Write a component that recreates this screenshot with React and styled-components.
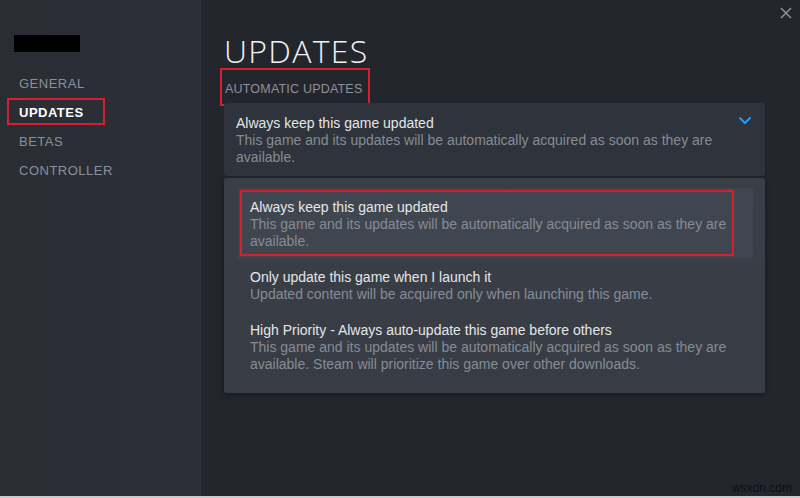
import React from "react";
import styled, { createGlobalStyle } from "styled-components";

const Global = createGlobalStyle`
  html, body { margin: 0; padding: 0; background: #23262d; }
  body { font-family: "Liberation Sans", Arial, sans-serif; }
  * { box-sizing: border-box; }
`;

const Window = styled.div`
  position: relative;
  width: 800px;
  height: 498px;
  display: flex;
  overflow: hidden;
  background: #23262d;
`;

const Sidebar = styled.nav`
  width: 201px;
  flex: none;
  background: linear-gradient(90deg, #2a2d34 0%, #2c2f37 100%);
  padding: 35px 0 0 0;
  display: flex;
  flex-direction: column;
`;

const Redacted = styled.div`
  width: 66px;
  height: 17px;
  background: #000;
  margin: 0 0 17px 14px;
`;

const NavItem = styled.div`
  position: relative;
  font-size: 13px;
  letter-spacing: 0.5px;
  height: 29px;
  line-height: 29px;
  padding-left: 19px;
  color: ${(p) => (p.$active ? "#ffffff" : "#8a9099")};
  font-weight: ${(p) => (p.$active ? 700 : 400)};
`;

const Highlight = styled.div`
  position: absolute;
  border: 2px solid #d3212f;
  pointer-events: none;
`;

const Main = styled.main`
  flex: 1;
  position: relative;
  padding: 33px 35px 0 23px;
  display: flex;
  flex-direction: column;
  background: #23262d;
`;

const Title = styled.h1`
  margin: 0;
  font-family: "Open Sans", "Liberation Sans", sans-serif;
  font-weight: 300;
  font-size: 32px;
  letter-spacing: 1.3px;
  line-height: 36px;
  color: #f2f2f2;
`;

const Section = styled.div`
  position: relative;
  font-size: 12.5px;
  letter-spacing: 0.2px;
  color: #8d939b;
  height: 34px;
  line-height: 40px;
  padding-left: 1px;
`;

const Select = styled.div`
  position: relative;
  background: #2f333b;
  border-radius: 3px;
  padding: 11px 40px 12px 12px;
  height: 73px;
`;

const OptTitle = styled.div`
  font-size: 14px;
  line-height: 18px;
  color: #e4e6e8;
`;

const OptDesc = styled.div`
  font-size: 14px;
  line-height: 17px;
  color: #868c94;
`;

const Chevron = styled.svg`
  position: absolute;
  right: 13px;
  top: 13px;
`;

const List = styled.div`
  margin-top: 2px;
  background: linear-gradient(180deg, #3a3f47 0%, #383d45 100%);
  border-radius: 3px;
  padding: 10px 12px 14px 14px;
  height: 215px;
  display: flex;
  flex-direction: column;
  box-shadow: 0 2px 6px rgba(0,0,0,0.35);
`;

const ListItem = styled.div`
  position: relative;
  padding: 10px 12px 8px 12px;
  background: ${(p) => (p.$selected ? "#40464f" : "transparent")};
`;

const Close = styled.svg`
  position: absolute;
  top: 7px;
  right: 8px;
`;

const BottomStrip = styled.div`
  position: absolute;
  left: 0;
  right: 0;
  bottom: 0;
  height: 2px;
  background: #c9cacc;
`;

const Watermark = styled.div`
  position: absolute;
  right: 8px;
  bottom: 3px;
  font-family: "Liberation Sans", Arial, sans-serif;
  font-size: 12px;
  color: #0d0f12;
`;

export default function App() {
  return (
    <>
      <Global />
      <Window>
        <Sidebar>
          <Redacted />
          <NavItem>GENERAL</NavItem>
          <NavItem $active>
            UPDATES
            <Highlight style={{ left: 7, top: 0, width: 98, height: 27 }} />
          </NavItem>
          <NavItem>BETAS</NavItem>
          <NavItem>CONTROLLER</NavItem>
        </Sidebar>
        <Main>
          <Close width="12" height="12" viewBox="0 0 12 12">
            <path d="M1 1L11 11M11 1L1 11" stroke="#8c9097" strokeWidth="1.5" />
          </Close>
          <Title>UPDATES</Title>
          <Section>
            AUTOMATIC UPDATES
            <Highlight style={{ left: -4, top: -1, width: 150, height: 38 }} />
          </Section>
          <Select>
            <OptTitle>Always keep this game updated</OptTitle>
            <OptDesc>
              This game and its updates will be automatically acquired as soon as they are available.
            </OptDesc>
            <Chevron width="14" height="9" viewBox="0 0 14 9">
              <path d="M1.5 1.5L7 7L12.5 1.5" fill="none" stroke="#1a9fff" strokeWidth="2" />
            </Chevron>
          </Select>
          <List>
            <ListItem $selected>
              <OptTitle>Always keep this game updated</OptTitle>
              <OptDesc>
                This game and its updates will be automatically acquired as soon as they are available.
              </OptDesc>
              <Highlight style={{ left: 2, top: 2, width: 494, height: 66 }} />
            </ListItem>
            <ListItem>
              <OptTitle>Only update this game when I launch it</OptTitle>
              <OptDesc>Updated content will be acquired only when launching this game.</OptDesc>
            </ListItem>
            <ListItem>
              <OptTitle>High Priority - Always auto-update this game before others</OptTitle>
              <OptDesc>
                This game and its updates will be automatically acquired as soon as they are available. Steam will prioritize this game over other downloads.
              </OptDesc>
            </ListItem>
          </List>
        </Main>
        <Watermark>wsxdn.com</Watermark>
        <BottomStrip />
      </Window>
    </>
  );
}
